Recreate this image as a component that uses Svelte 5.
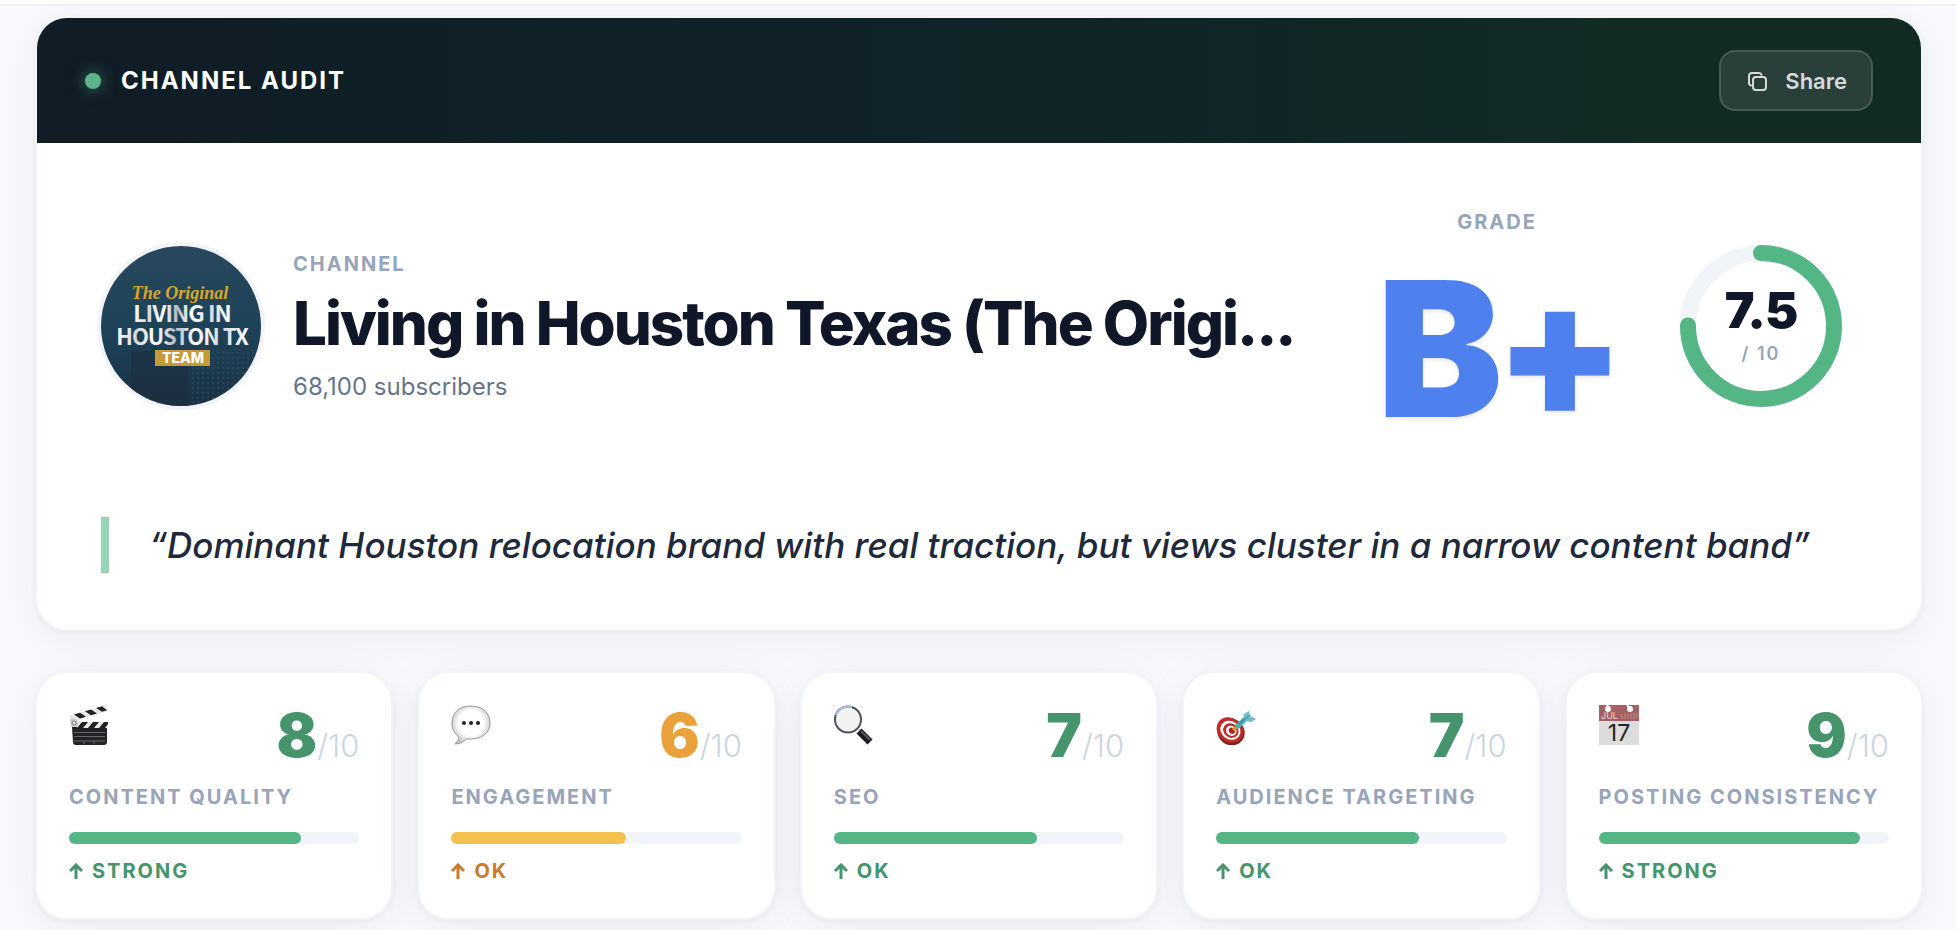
<script>
	const channel = {
		name: 'Living in Houston Texas (The Original)',
		shown: 'Living in Houston Texas (The Origi...',
		subscribers: 68100,
		grade: 'B+',
		score: 7.5,
		quote: 'Dominant Houston relocation brand with real traction, but views cluster in a narrow content band'
	};

	const metrics = [
		{ icon: 'clapper', label: 'Content Quality', score: 8, status: 'Strong', tone: 'good' },
		{ icon: 'bubble', label: 'Engagement', score: 6, status: 'OK', tone: 'fair' },
		{ icon: 'lens', label: 'SEO', score: 7, status: 'OK', tone: 'good' },
		{ icon: 'target', label: 'Audience Targeting', score: 7, status: 'OK', tone: 'good' },
		{ icon: 'calendar', label: 'Posting Consistency', score: 9, status: 'Strong', tone: 'good' }
	];

	const radius = 73;
	const around = 2 * Math.PI * radius;
	const filled = (around * channel.score) / 10;
</script>

<main class="page">
	<section class="card audit">
		<header class="bar">
			<div class="bar-title"><span class="dot"></span>Channel Audit</div>
			<button type="button" class="share">
				<svg width="20" height="20" viewBox="0 0 20 20" fill="none" stroke="currentColor" stroke-width="2" stroke-linecap="round" stroke-linejoin="round" aria-hidden="true">
					<rect x="6" y="6" width="13" height="13" rx="3" />
					<path d="M4 14.4C2.7 14.2 2 13.3 2 12V5c0-1.8 1.2-3 3-3h7c1.3 0 2.2.6 2.5 1.8" />
				</svg>
				Share
			</button>
		</header>

		<div class="body">
			<div class="row">
				<svg class="avatar" viewBox="0 0 160 160" role="img" aria-label="Channel logo">
					<defs>
						<linearGradient id="sky" x1="0" y1="0" x2="0" y2="1">
							<stop offset="0" stop-color="#28485d" />
							<stop offset=".55" stop-color="#1d4258" />
							<stop offset="1" stop-color="#1c3042" />
						</linearGradient>
						<linearGradient id="steel" x1="0" x2="1">
							<stop offset="0" stop-color="#fff" />
							<stop offset=".15" stop-color="#d5d8db" />
							<stop offset=".3" stop-color="#fff" />
							<stop offset=".45" stop-color="#b4b8bd" />
							<stop offset=".6" stop-color="#fff" />
							<stop offset=".8" stop-color="#d8dbde" />
							<stop offset="1" stop-color="#fff" />
						</linearGradient>
						<pattern id="grid" width="5" height="5" patternUnits="userSpaceOnUse">
							<circle cx="2" cy="2" r="1" fill="#3a6274" />
						</pattern>
					</defs>
					<rect width="160" height="160" fill="url(#sky)" />
					<path d="M30 105h57v55H30z" fill="#1b2c3d" opacity=".5" />
					<path d="M88 106h72v54H88z" fill="url(#grid)" opacity=".4" />
					<g text-anchor="middle">
						<text class="logo" x="81" y="76" font-size="23" fill="url(#steel)">LIVING IN</text>
						<text class="logo" x="81" y="99" font-size="22" fill="url(#steel)">HOUSTON TX</text>
						<text class="script" x="79" y="53" font-size="18" fill="#d9a42d">The Original</text>
						<path d="M54 104h55v16H54z" fill="#c79a36" />
						<text class="team" x="82" y="117" font-size="14" fill="#fff">TEAM</text>
					</g>
				</svg>

				<div class="who">
					<div class="label">Channel</div>
					<h1 title={channel.name}>{channel.shown}</h1>
					<p>{channel.subscribers.toLocaleString('en-US')} subscribers</p>
				</div>

				<div class="grade">
					<div class="label">Grade</div>
					<strong>{channel.grade}</strong>
				</div>

				<div class="ring">
					<svg viewBox="0 0 192 192" aria-hidden="true">
						<circle cx="96" cy="96" r={radius} stroke="#f1f5fa" />
						<circle cx="96" cy="96" r={radius} stroke="#55b685" stroke-linecap="round" stroke-dasharray="{filled} {around}" />
					</svg>
					<div class="ring-text">
						<b>{channel.score}</b>
						<span>/ 10</span>
					</div>
				</div>
			</div>

			<blockquote>“{channel.quote}”</blockquote>
		</div>
	</section>

	<section class="metrics">
		{#each metrics as m (m.label)}
			<article class="card metric {m.tone}">
				<div class="top">
					<svg width="40" height="40" viewBox="0 0 40 40" aria-hidden="true">
						{#if m.icon === 'clapper'}
							<path d="M0 11 37 0l2 6L3 17z" fill="#e6e6e6" />
							<path d="m5 9.600 6-1.800 6 4-6 1.800zM16 6.300l6-1.800 6 4-6 1.800zM27 3l6-1.800 5 4-5 1.600z" fill="#222" />
							<path d="M1 14c5-2 9 1 10 8H2z" fill="#c9cccd" />
							<circle cx="5" cy="18" r="2" fill="#eee" stroke="#777" />
							<path d="M3 22h35v15q0 3-3 3H7q-3 0-3-3z" fill="#222325" />
							<path d="M10 17h29v6H8z" fill="#e9e9e9" />
							<path d="m13 17h6l-5 6H8zM24 17h6l-5 6h-6zM35 17h4v2l-3 4h-6z" fill="#222" />
							<path d="M5 27.500h31M5 31.500h31M5 36h31M15 36v3M25 36v3" stroke="#66686b" fill="none" />
						{:else if m.icon === 'bubble'}
							<defs>
								<radialGradient id="puff" cx=".5" cy=".45" r=".55">
									<stop offset=".6" stop-color="#fff" />
									<stop offset="1" stop-color="#c4c4c4" />
								</radialGradient>
							</defs>
							<path d="M20 1C8 1 1 8 1 18c0 6 2 10 6 13 1 3 0 5-3 8 5 0 8-2 11-5 16 1 24-6 24-16S32 1 20 1z" fill="url(#puff)" stroke="#999" />
							<g fill="#222"><circle cx="13" cy="18" r="2" /><circle cx="20" cy="18" r="2" /><circle cx="27" cy="18" r="2" /></g>
						{:else if m.icon === 'lens'}
							<path d="m25 26 11 11" stroke="#191c1f" stroke-width="7" />
							<path d="m27 26 9 9" stroke="#555b61" stroke-width="2" />
							<circle cx="14" cy="14.500" r="13" fill="#f2f2f3" stroke="#4d535b" stroke-width="2" />
							<path d="M2 10A13 13 0 0 1 18 2" fill="none" stroke="#a9c5df" stroke-width="2" />
						{:else if m.icon === 'target'}
							<ellipse cx="15" cy="27" rx="14" ry="13" fill="#85201f" transform="rotate(35 15 27)" />
							<g transform="rotate(35 14 25)">
								<ellipse cx="14" cy="25" rx="14" ry="12" fill="#bd2d2a" />
								<ellipse cx="14.500" cy="25" rx="10.500" ry="9" fill="#fff" />
								<ellipse cx="15" cy="25" rx="8" ry="7" fill="#bd2d2a" />
								<ellipse cx="15.500" cy="25" rx="5.500" ry="4.800" fill="#fff" />
								<ellipse cx="16" cy="24.500" rx="3.300" ry="3" fill="#a92725" />
							</g>
							<path d="m17 25 5-4" stroke="#d49a2b" stroke-width="3" />
							<path d="m22 21 8-8" stroke="#4ea9b8" stroke-width="5" stroke-linecap="round" />
							<path d="M28 14V9l5-3 1 5 6 3-5 3-6-1z" fill="#6cbccb" />
							<path d="m23 19 11-9" stroke="#347f91" />
						{:else}
							<path d="M0 0h40v40H0z" fill="#dcdcdc" />
							<path d="M0 0h40v16H0z" fill="#a46163" />
							<path d="M8.500 0v4M28 0l3 4" stroke="#fff" stroke-width="2" />
							<circle cx="9" cy="4" r="3" fill="#fff" /><circle cx="31" cy="4" r="3" fill="#fff" />
							<path d="M23 9v5M26 8v6M29 9v5M32 8v6M35 8v6M38 8v5" stroke="#bd8b8b" />
							<text class="cal" x="2" y="14" font-size="9" fill="#ead7d7">JUL</text>
							<text class="cal" x="20" y="36" font-size="23" text-anchor="middle" fill="#252525">17</text>
						{/if}
					</svg>
					<div class="score"><b>{m.score}</b><span>/10</span></div>
				</div>
				<h2 class="label">{m.label}</h2>
				<div class="track"><div class="fill" style="width: {m.score * 10}%"></div></div>
				<div class="status">
					<svg width="14" height="16" viewBox="0 0 14 16" fill="none" stroke="currentColor" stroke-width="3" aria-hidden="true">
						<path d="M7 16V2M1 8l6-6 6 6" />
					</svg>
					{m.status}
				</div>
			</article>
		{/each}
	</section>
</main>

<style>
	:global(body) { margin: 0; background: #f8fafd; }

	.page {
		padding: 10px 33px 10px 35px;
		border-top: 2px solid #eff2f7;
		margin-top: 4px;
		font-family: Inter, "Liberation Sans", sans-serif;
		color: #0f172a;
		box-shadow: 0 -4px 0 #fff;
	}
	h1, h2, p, blockquote { margin: 0; }

	.card {
		background: #fff;
		border: 2px solid #f1f5f9;
		border-radius: 32px;
		box-shadow: 0 2px 6px rgba(15, 23, 42, .04), 0 8px 48px rgba(15, 23, 42, .06);
	}
	.audit { overflow: hidden; }

	.label {
		font-size: 20px;
		font-weight: 700;
		line-height: 30px;
		letter-spacing: 2px;
		text-transform: uppercase;
		white-space: nowrap;
		color: #97a4ba;
	}

	/* header */
	.bar {
		display: flex;
		align-items: center;
		justify-content: space-between;
		padding: 32px 48px;
		background: linear-gradient(90deg, #101c26, #102428 55%, #112b24 85%);
	}
	.bar-title {
		display: flex;
		align-items: center;
		gap: 20px;
		font-size: 24px;
		font-weight: 700;
		letter-spacing: 2px;
		text-transform: uppercase;
		color: #fff;
	}
	.dot {
		width: 16px;
		height: 16px;
		border-radius: 50%;
		background: #5cb48a;
		box-shadow: 0 0 16px rgba(92, 180, 138, .6);
	}
	.share {
		display: flex;
		align-items: center;
		gap: 18px;
		height: 61px;
		padding: 0 24px 0 26px;
		border: 2px solid #475a54;
		border-radius: 16px;
		background: #29403a;
		color: #d5dad8;
		font: 600 22px Inter, "Liberation Sans", sans-serif;
		cursor: pointer;
	}

	/* summary */
	.body { padding: 64px 64px 56px; }
	.row { display: flex; align-items: center; }
	.avatar {
		flex: none;
		width: 160px;
		height: 160px;
		border-radius: 50%;
		box-shadow: 0 0 0 4px #f1f5fa;
	}
	.logo { font-family: "Noto Sans CJK SC", sans-serif; font-weight: 700; letter-spacing: -1px; }
	.script { font-family: "Liberation Serif", serif; font-style: italic; font-weight: 700; }
	.team { font-family: Inter, sans-serif; font-weight: 800; }
	.cal { font-family: Inter, sans-serif; }

	.who { flex: 1; min-width: 0; margin-left: 32px; padding-top: 2px; }
	h1 {
		margin: 8px 0 10px;
		font-size: 60px;
		font-weight: 800;
		line-height: 72px;
		letter-spacing: -2px;
		white-space: nowrap;
		color: #101728;
	}
	p { font-size: 24px; line-height: 36px; color: #66748b; }

	.grade { flex: none; text-align: center; }
	.grade strong {
		display: block;
		margin-top: 16px;
		font-size: 188px;
		font-weight: 900;
		line-height: 192px;
		letter-spacing: -8px;
		color: #4e80ee;
		text-shadow: 0 2px 4px rgba(15, 23, 42, .1);
	}

	.ring { display: grid; flex: none; width: 192px; margin-left: 48px; }
	.ring > * { grid-area: 1 / 1; }
	.ring circle { fill: none; stroke-width: 16px; transform: rotate(-90deg); transform-origin: center; }
	.ring-text {
		display: flex;
		flex-direction: column;
		align-items: center;
		justify-content: center;
		gap: 8px;
	}
	.ring-text b { font-size: 50px; font-weight: 900; line-height: 48px; letter-spacing: -1px; color: #101728; }
	.ring-text span { font-size: 18px; font-weight: 600; line-height: 24px; letter-spacing: 2px; color: #97a4ba; }

	blockquote {
		margin-top: 72px;
		padding-left: 40px;
		border-left: 8px solid #98d3b5;
		font-size: 35px;
		font-style: italic;
		font-weight: 500;
		line-height: 56px;
		color: #1e293b;
	}

	/* metric cards */
	.metrics {
		display: grid;
		grid-template-columns: repeat(5, minmax(0, 1fr));
		gap: 24px;
		margin-top: 40px;
	}
	.metric { padding: 32px; --bar: #55b685; --ink: #45946c; --num: #45946c; }
	.metric.fair { --bar: #f2c14e; --ink: #c97b2e; --num: #e9a23b; }
	.metric .label { margin: 17px 0 20px; }
	.top { display: flex; align-items: flex-start; justify-content: space-between; }
	.score { display: flex; align-items: baseline; }
	.score b { font-size: 60px; font-weight: 900; line-height: 60px; color: var(--num); }
	.score span { font-size: 31px; font-weight: 300; line-height: 30px; color: #cbd5e1; }
	.track { height: 12px; border-radius: 6px; background: #f1f5fa; }
	.fill { height: 12px; border-radius: 6px; background: var(--bar); }
	.status {
		display: flex;
		align-items: center;
		gap: 9px;
		margin-top: 12px;
		font-size: 20px;
		font-weight: 700;
		line-height: 30px;
		letter-spacing: 2px;
		text-transform: uppercase;
		color: var(--ink);
	}
</style>
